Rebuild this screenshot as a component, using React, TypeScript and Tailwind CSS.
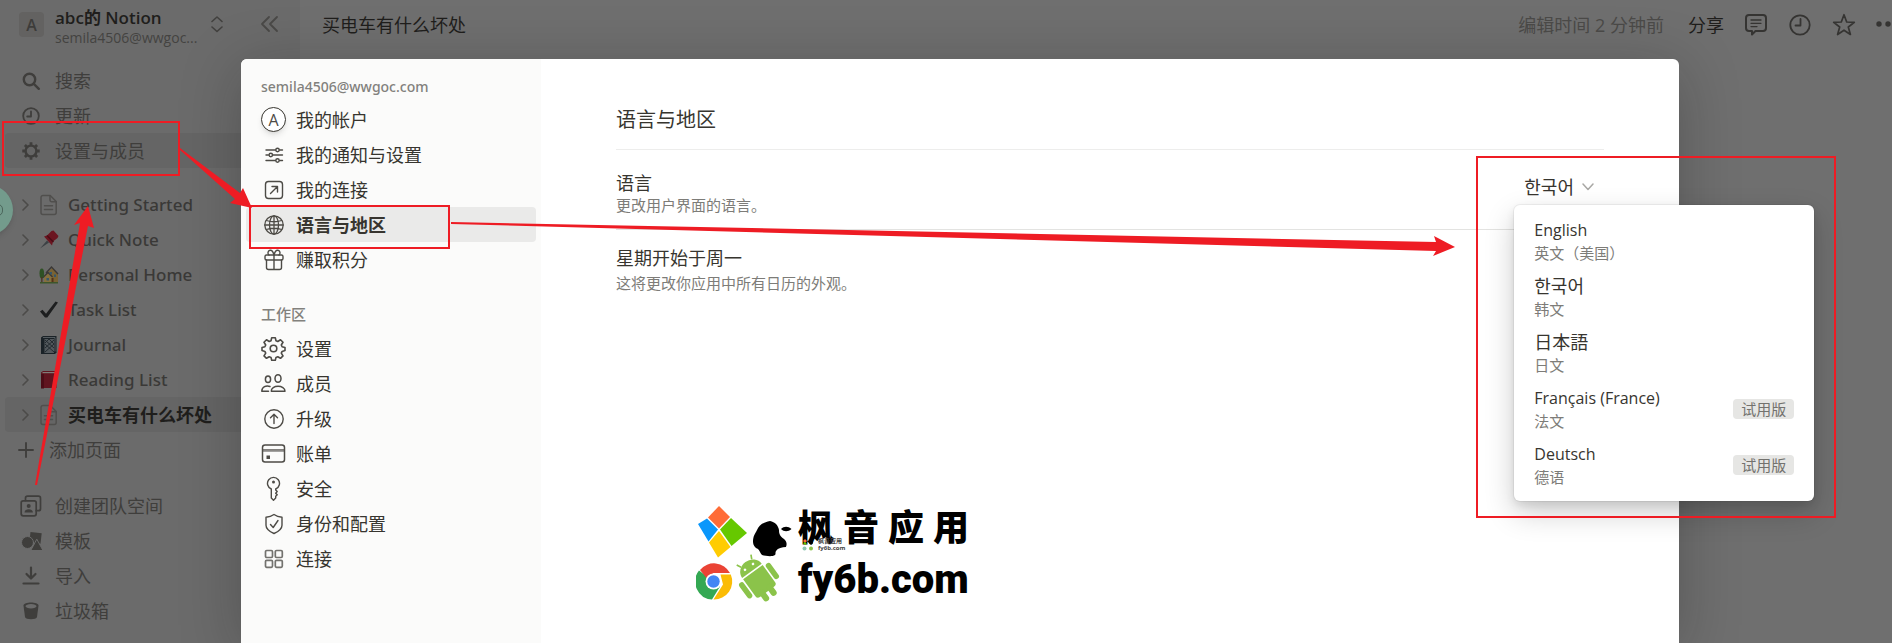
import type { ReactNode } from 'react'

type IconProps = { children: ReactNode; className?: string; box?: string; width?: number }

function Icon({ children, className = 'size-[22px]', box = '0 0 22 22', width = 1.4 }: IconProps) {
  return (
    <svg
      className={`shrink-0 ${className}`}
      viewBox={box}
      fill="none"
      stroke="currentColor"
      strokeWidth={width}
      strokeLinecap="round"
      strokeLinejoin="round"
      aria-hidden="true"
    >
      {children}
    </svg>
  )
}

const pageIcon = (
  <Icon className="size-[22px] text-[#504f4d]" width={1.5}>
    <path d="M5 1.500h7.200L18.200 7.500V18.500a2 2 0 0 1-2 2H5a2 2 0 0 1-2-2v-15a2 2 0 0 1 2-2z" />
    <path d="M12 1.700V6a1.700 1.700 0 0 0 1.700 1.700H18" />
    <path d="M6.500 11.700h8M6.500 15.500h8" />
  </Icon>
)

const topLinks = [
  {
    label: '搜索',
    icon: <Icon width={2.4}><circle cx="9.500" cy="9.500" r="5.700" /><path d="m13.800 13.800 5 5" /></Icon>,
  },
  {
    label: '更新',
    icon: <Icon width={1.8}><circle cx="11" cy="11" r="7.800" /><path d="M11 6.500V11.500H7.200" /></Icon>,
  },
  {
    label: '设置与成员',
    active: true,
    icon: (
      <Icon width={2.4}>
        <circle cx="11" cy="11" r="5.400" />
        <g strokeWidth="2.800" strokeLinecap="butt">
          <path d="M11 2.300v3.500M11 16.200v3.500M2.300 11H6M16 11h3.700M4.900 4.900l2.500 2.500M14.600 14.600 17.100 17.100M4.900 17.100l2.500-2.500M14.600 7.400 17.100 4.900" />
        </g>
      </Icon>
    ),
  },
]

const pages = [
  { label: 'Getting Started', icon: pageIcon },
  {
    label: 'Quick Note',
    icon: (
      <svg className="size-[20px]" viewBox="0 0 20 20" aria-hidden="true">
        <path d="m1 18.500 7-8 2 2z" fill="#3c4145" />
        <path d="m5 6.500 3-1 4.500-4.500 2-.5 5 5.500-1 2-4.500 3.500-1 4z" fill="#6b1520" />
        <path d="m8 5.500 6.500 6.500" stroke="#4a0c15" strokeWidth="1.500" />
      </svg>
    ),
  },
  {
    label: 'Personal Home',
    icon: (
      <svg className="size-[20px]" viewBox="0 0 20 20" aria-hidden="true">
        <path d="M8 8.500 13 3l6 6v8.500H7z" fill="#7a6334" />
        <path d="m5 12 4-4 4 4v5.500H5z" fill="#85703f" />
        <path d="m7 8 5.500-6L19 9M4 12.500l5-5 4.500 4.500" stroke="#3b3836" strokeWidth="1.400" fill="none" />
        <path d="M10.500 7h2.500v2.500h-2.500zM15 9.500h2V12h-2zM7.500 13H10v2.500H7.500z" fill="#34576d" />
        <path d="M12.500 13h2v4.500h-2z" fill="#543119" />
        <ellipse cx="2.800" cy="8.500" rx="2.300" ry="5" fill="#2f5125" />
        <path d="M2.200 12h1.300v5.500H2.200z" fill="#4d3320" />
        <path d="M1 17h18v1.500H1z" fill="#3d562b" />
      </svg>
    ),
  },
  {
    label: 'Task List',
    icon: (
      <svg className="size-[20px]" viewBox="0 0 20 20" aria-hidden="true">
        <path d="m1 11.500 2.500-1.800 3.500 4L16.500 1.500l2.500 1L8.300 17.500H6z" fill="#1d1e1f" />
      </svg>
    ),
  },
  {
    label: 'Journal',
    icon: (
      <svg className="size-[20px]" viewBox="0 0 20 20" aria-hidden="true">
        <path d="M2 2.500 4 1h13.500v16.500L16 19H2z" fill="#1a2227" />
        <path d="M5.500 4h9.500v14H5.500z" fill="#52585c" />
        <path d="m6 5 9 8M6 9l9 8M10 4l5 5M15 5l-9 8M15 9l-9 8M10 4 6 8" stroke="#222a2f" strokeWidth="1" />
        <path d="M4 2.500h12v14" stroke="#646b6f" strokeWidth=".8" fill="none" />
      </svg>
    ),
  },
  {
    label: 'Reading List',
    icon: (
      <svg className="size-[20px]" viewBox="0 0 20 20" aria-hidden="true">
        <path d="M2 2.500 4 1h13.500v17H2z" fill="#60141f" />
        <path d="M3.500 2h13v1.200h-13z" fill="#817b78" />
        <path d="M2 4h3v14.500H2z" fill="#4c0c16" />
      </svg>
    ),
  },
  { label: '买电车有什么坏处', icon: pageIcon, active: true },
]

const bottomLinks = [
  {
    label: '创建团队空间',
    icon: (
      <Icon width={1.700}>
        <path d="M5.500 5.500V3.200a2 2 0 0 1 2-2h11a2 2 0 0 1 2 2v10.500a2 2 0 0 1-2 2h-2.300" />
        <rect x="1.200" y="5.800" width="15" height="15" rx="2" />
        <circle cx="8.700" cy="11" r="2" fill="currentColor" stroke="none" />
        <path d="M4.500 17.500c0-4.300 8.400-4.300 8.400 0z" fill="currentColor" stroke="none" />
      </Icon>
    ),
  },
  {
    label: '模板',
    icon: (
      <Icon>
        <g fill="currentColor" stroke="none">
          <path d="m10.500 2 11.200 1.300-1.200 10.500-11.200-1.300z" />
          <circle cx="7.500" cy="12.500" r="6" stroke="#6b6b6b" strokeWidth="1" />
          <path d="m17 9.500 6 11H11z" stroke="#6b6b6b" strokeWidth="1" />
        </g>
      </Icon>
    ),
  },
  { label: '导入', icon: <Icon width={2.200}><path d="M11 2.500v10M6.500 9l4.500 4.500L15.500 9M3.500 18.500h15" /></Icon> },
  {
    label: '垃圾箱',
    icon: (
      <Icon>
        <path d="M3.500 5.500c0-4 15-4 15 0L17 17c-.5 3-11.500 3-12 0z" fill="currentColor" stroke="none" />
        <ellipse cx="11" cy="6.200" rx="5.500" ry="2.200" fill="#6b6b6b" stroke="none" />
      </Icon>
    ),
  },
]

const accountItems = [
  {
    label: '我的帐户',
    icon: (
      <span className="flex size-[25px] shrink-0 items-center justify-center rounded-full border border-[#37352f] bg-white text-base shadow-md">
        A
      </span>
    ),
  },
  {
    label: '我的通知与设置',
    icon: (
      <Icon>
        <path d="M3 6h9.500M16.500 6h3M3 11h2.500M9.500 11h10M3 16.500h9.500M16.500 16.500h3" />
        <circle cx="14.500" cy="6" r="1.700" /><circle cx="7.800" cy="11" r="1.700" /><circle cx="14.500" cy="16.500" r="1.700" />
      </Icon>
    ),
  },
  {
    label: '我的连接',
    icon: <Icon><rect x="2.500" y="2.500" width="17" height="17" rx="3" /><path d="m7.500 14.500 6.500-6.500M9 7.500h5.500V13" /></Icon>,
  },
  {
    label: '语言与地区',
    active: true,
    icon: (
      <Icon width={1.300}>
        <circle cx="11" cy="11" r="9.200" />
        <ellipse cx="11" cy="11" rx="4.500" ry="9.200" />
        <path d="M11 1.800v18.400M1.800 11h18.400M3.500 6.500c4.500 1.500 10.500 1.500 15 0M3.500 15.500c4.500-1.500 10.500-1.500 15 0" />
      </Icon>
    ),
  },
  {
    label: '赚取积分',
    icon: (
      <Icon>
        <rect x="2" y="6" width="18" height="5" rx="1.500" />
        <path d="M3.500 11v7.500a2 2 0 0 0 2 2h11a2 2 0 0 0 2-2V11M11 6v14.500" />
        <path d="M11 6C10 2 8.500 1 7 1.200 4.500 1.600 4.500 5 6 6M11 6c1-4 2.500-5 4-4.800C17.500 1.600 17.500 5 16 6" />
      </Icon>
    ),
  },
]

const workspaceItems = [
  {
    label: '设置',
    icon: (
      <Icon className="size-[25px]" box="0 0 25 25" width={1.600}>
        <circle cx="12.500" cy="12.500" r="3.300" />
        <path d="M10.700 1.700h3.600l.7 3 1.800.8 2.700-1.700 2.500 2.500-1.700 2.700.8 1.800 2.900.7v3l-2.900.9-.8 1.700 1.700 2.800-2.500 2.400-2.700-1.600-1.800.7-.7 2.900h-3.600l-.7-2.900-1.800-.7-2.700 1.600L3 19.900l1.700-2.800-.8-1.700L1 14.500v-3l2.900-.7.8-1.800L3 6.300l2.500-2.500 2.700 1.700 1.800-.8z" />
      </Icon>
    ),
  },
  {
    label: '成员',
    icon: (
      <Icon className="size-[25px]" box="0 0 25 25" width={1.500}>
        <ellipse cx="17" cy="7.500" rx="3" ry="3.800" /><ellipse cx="7" cy="8.300" rx="2.600" ry="3.300" />
        <path d="M10.300 20.300c-.6-6.600 14-6.600 13.700 0zM7.500 20.300H.8c0-4.500 4.400-6.300 8.200-4.800" />
      </Icon>
    ),
  },
  { label: '升级', icon: <Icon><circle cx="11" cy="11" r="9.200" /><path d="M11 15.500v-9M7.500 9.700 11 6.300l3.500 3.400" /></Icon> },
  {
    label: '账单',
    icon: (
      <Icon className="size-[25px]" box="0 0 25 25" width={1.500}>
        <rect x="1.500" y="4" width="22" height="17" rx="2.500" /><path d="M1.500 8.800h22M1.500 10h22" strokeWidth="1" />
        <path d="M5.500 14.500h3.500V18H5.500z" fill="currentColor" stroke="none" />
      </Icon>
    ),
  },
  {
    label: '安全',
    icon: (
      <Icon className="size-[25px]" box="0 0 25 25">
        <path d="M10.300 13V22l2.200 2.200 2.200-2.200v-1.700l1.500-1.500-1.500-1.600 1.500-1.700-1.500-1.500v-1a6 6 0 1 0-4.400 0z" />
        <circle cx="12.500" cy="6" r="1.500" fill="currentColor" stroke="none" />
      </Icon>
    ),
  },
  {
    label: '身份和配置',
    icon: <Icon><path d="M11 1.500c2.500 1.800 5 2.500 8 2.700v8c0 4-4 6.500-8 8.300-4-1.800-8-4.300-8-8.300v-8c3-.2 5.500-.9 8-2.700z" /><path d="m7.500 11.500 2.700 3L15 7.500" /></Icon>,
  },
  {
    label: '连接',
    icon: (
      <Icon className="size-[22px] text-[#73726e]" width={1.700}>
        <rect x="2.500" y="2.500" width="7" height="7" rx="1.200" /><rect x="12.300" y="2.500" width="7" height="7" rx="1.200" />
        <rect x="2.500" y="12.300" width="7" height="7" rx="1.200" /><rect x="12.300" y="12.300" width="7" height="7" rx="1.200" />
      </Icon>
    ),
  },
]

const languages = [
  { name: 'English', note: '英文（美国）' },
  { name: '한국어', note: '韩文', lang: 'ko' },
  { name: '日本語', note: '日文', lang: 'ja' },
  { name: 'Français (France)', note: '法文', beta: true },
  { name: 'Deutsch', note: '德语', beta: true },
]

function SideLink({ label, icon, active }: { label: string; icon: ReactNode; active?: boolean }) {
  return (
    <a href="#" className={`mx-[5px] flex h-[35px] items-center gap-[13px] rounded pl-[15px] text-lg text-[#3f3e3c] ${active ? 'bg-[#656565]' : ''}`}>
      {icon}
      {label}
    </a>
  )
}

function SettingsItem({ label, icon, active }: { label: string; icon: ReactNode; active?: boolean }) {
  return (
    <button type="button" className={`mx-[5px] flex h-[35px] items-center gap-[10px] rounded pl-[15px] text-lg ${active ? 'bg-[#eaeae9] font-bold' : ''}`}>
      <span className="flex w-[25px] justify-center text-[#4d4b46]">{icon}</span>
      {label}
    </button>
  )
}

function Sidebar() {
  return (
    <aside className="flex w-[300px] shrink-0 flex-col bg-[#6b6b6b]">
      <div className="flex h-[63px] items-start pt-2 pl-[19px]">
        <span className="mt-1 flex size-[25px] items-center justify-center rounded bg-[#636261] font-semibold text-[#3d3c3a]">A</span>
        <div className="ml-[11px] w-[153px] whitespace-nowrap">
          <div className="text-[17px] leading-[20px] font-semibold text-[#1f1e1c]">abc的 Notion</div>
          <div className="text-sm leading-[20px] text-[#444341]">semila4506@wwgoc...</div>
        </div>
        <Icon className="mt-1 ml-[3px] h-6 w-3 text-[#42413f]" box="0 0 12 24" width={1.600}>
          <path d="m1 9.500 5-4.500 5 4.500M1 15l5 4.500 5-4.500" />
        </Icon>
        <button type="button" aria-label="Close sidebar" className="mt-1 ml-[36px] text-[#4a4947]">
          <Icon className="h-6 w-5" box="0 0 20 24" width={1.800}>
            <path d="m10 5-7 7 7 7M18 5l-7 7 7 7" />
          </Icon>
        </button>
      </div>
      <nav className="flex flex-col">
        {topLinks.map((link) => <SideLink key={link.label} {...link} />)}
      </nav>
      <nav className="mt-[19px] flex flex-col">
        {pages.map((page) => (
          <a
            key={page.label}
            href="#"
            className={`mx-[5px] flex h-[35px] items-center rounded pl-[14px] font-['Noto_Sans','Noto_Sans_CJK_SC',sans-serif] ${page.active ? 'bg-[#656565] text-lg font-bold text-[#1f1e1c]' : 'text-[17px] font-medium text-[#3a3937]'}`}
          >
            <Icon className="h-3 w-3 text-[#4c4b49]" box="0 0 12 12" width={1.600}><path d="m4 1 5 5-5 5" /></Icon>
            <span className="ml-[7px] flex w-[22px] justify-center">{page.icon}</span>
            <span className="ml-2">{page.label}</span>
          </a>
        ))}
        <button type="button" className="flex h-[35px] items-center gap-3 pl-[15px] text-lg text-[#3f3e3c]">
          <Icon width={1.900}><path d="M11 4v14M4 11h14" /></Icon>
          添加页面
        </button>
      </nav>
      <nav className="mt-[21px] flex flex-col">
        {bottomLinks.map((link) => <SideLink key={link.label} {...link} />)}
      </nav>
    </aside>
  )
}

function TopBar() {
  return (
    <header className="flex h-[50px] items-center pl-[22px] text-lg text-[#1f1e1c]">
      <h1>买电车有什么坏处</h1>
      <span className="ml-auto text-[#4b4a48]">编辑时间 2 分钟前</span>
      <button type="button" className="ml-6">分享</button>
      <button type="button" aria-label="Comments" className="ml-5 text-[#353432]">
        <Icon className="size-6" box="0 0 24 24" width={2}>
          <path d="M5 2h14a3 3 0 0 1 3 3v10a3 3 0 0 1-3 3h-7.500L8 21.500V18H5a3 3 0 0 1-3-3V5a3 3 0 0 1 3-3z" />
          <path d="M7 7h10M7 10.300h10M7 13.600h6" strokeWidth="1.300" />
        </Icon>
      </button>
      <button type="button" aria-label="Updates" className="ml-5 text-[#353432]">
        <Icon className="size-6" box="0 0 24 24" width={1.800}><circle cx="12" cy="12" r="9.700" /><path d="M12.500 6v6.500h-5" /></Icon>
      </button>
      <button type="button" aria-label="Favorite" className="ml-5 text-[#353432]">
        <Icon className="size-6" box="0 0 24 24" width={1.700}>
          <path d="m12 1.700 2.700 7.300 7.600.3-6 4.700 2.100 7.500-6.400-4.300-6.400 4.300 2.100-7.500-6-4.700 7.600-.3z" />
        </Icon>
      </button>
      <button type="button" aria-label="More" className="ml-5 text-[#353432]">
        <svg className="h-6 w-4" viewBox="0 0 16 24" fill="currentColor" aria-hidden="true">
          <circle cx="3" cy="11" r="2.700" /><circle cx="12" cy="11" r="2.700" />
        </svg>
      </button>
    </header>
  )
}

function LanguageSelect() {
  return (
    <div className="relative">
      <button type="button" aria-haspopup="listbox" aria-expanded="true" className="flex h-9 items-center gap-2 px-[10px] text-lg" lang="ko">
        한국어
        <Icon className="size-3 text-[#a9a8a5]" box="0 0 12 12" width={1.500}><path d="m1 3 5 5.500L11 3" /></Icon>
      </button>
      <ul
        role="listbox"
        aria-label="语言"
        className="absolute top-full left-0 z-10 w-[300px] rounded-md bg-white py-2 shadow-[0_0_0_1px_rgba(15,15,15,0.05),0_4px_8px_rgba(15,15,15,0.1),0_12px_30px_rgba(15,15,15,0.2)]"
      >
        {languages.map((item) => (
          <li key={item.name} role="option" aria-selected={item.lang === 'ko'} className="flex h-14 items-center justify-between px-5">
            <div>
              <div className={`leading-6 ${item.lang ? 'text-lg' : 'text-base'}`} lang={item.lang}>{item.name}</div>
              <div className="text-[15px] leading-[22px] text-[#7d7c78]">{item.note}</div>
            </div>
            {item.beta && <span className="rounded bg-[#e6e6e4] px-2 text-[15px] leading-5 text-[#73726e]">试用版</span>}
          </li>
        ))}
      </ul>
    </div>
  )
}

function BrandMark() {
  return (
    <div className="pointer-events-none absolute top-[445px] left-[455px] flex gap-1 text-black">
      <svg className="h-[104px] w-[98px]" viewBox="0 0 98 104" aria-hidden="true">
        <path d="M23 2 34 13 23 24.500 12 13.500z" fill="#ff6c37" />
        <path d="m11 14.500 11 11-9.500 12L2 20z" fill="#0a97fb" />
        <path d="m35 14 16 15-15.500 13L24 25.500z" fill="#66c800" />
        <path d="m23 27 11.500 16L22 53.500 13 38.500z" fill="#ffcc02" />
        <path d="M57 38c0-6 2-8 4-12 2-5 7-8 13-9 5 1 8 4 9 9 0 4 1 6 5 9 3 3 3 5 2 8-4 0-8 1-10 4-1 2 0 3-1 4-3 2-9 1-13 0-2-2-2-4-4-6-3-1-5-4-5-7z" />
        <path d="M85 25c3-3 7-3 10.500 0-3.500 3-7.500 3-10.500 0z" />
        <path d="M17.500 77.500 3 66.500A18 18 0 0 0 16 95.500l8-13z" fill="#34a853" />
        <path d="M4 66a18 18 0 0 1 30 3H17.500l-7 5z" fill="#ea4335" />
        <path d="M24.500 70.500h10.300a18 18 0 0 1-17.300 25l9.500-15z" fill="#fbbc05" />
        <circle cx="17.500" cy="77.500" r="8" fill="#fff" /><circle cx="17.500" cy="77.500" r="6.200" fill="#4285f4" />
        <g transform="translate(64 78) rotate(-36) scale(1.100)" fill="#8bc34a">
          <path d="M-11-12.500a11 10 0 0 1 22 0z" /><path d="M-11-11h22V8a3 3 0 0 1-3 3H-8a3 3 0 0 1-3-3z" />
          <rect x="-17.500" y="-10" width="5" height="17" rx="2.500" /><rect x="12.500" y="-10" width="5" height="17" rx="2.500" />
          <rect x="-7" y="6" width="5.500" height="12" rx="2.700" /><rect x="1.500" y="6" width="5.500" height="12" rx="2.700" />
          <path d="m-6-21-2-4M6-21l2-4" stroke="#8bc34a" strokeWidth="1.500" />
          <circle cx="-4.500" cy="-17" r="1.200" fill="#fff" /><circle cx="4.500" cy="-17" r="1.200" fill="#fff" />
        </g>
      </svg>
      <div className="relative flex flex-col">
        <div className="flex h-[48px] items-center gap-[9px] text-4xl font-black">
          <span>枫</span><span>音</span><span>应</span><span>用</span>
        </div>
        <div className="font-['Roboto',sans-serif] text-[40px] leading-[56px] font-black">fy6b.com</div>
        <div className="absolute top-[34px] left-1 flex items-center gap-1 text-[6px] leading-[7px] text-[#444444]">
          <svg className="h-3 w-3" viewBox="0 0 12 12" aria-hidden="true">
            <path d="m3 0 2 2-2 2-2-2z" fill="#ff6c37" /><path d="m3 3 2 2-2 1-2-2z" fill="#66c800" />
            <circle cx="9" cy="3.500" r="2" fill="#000" /><circle cx="2.500" cy="9.500" r="2" fill="#8fc5b0" /><circle cx="9" cy="9.500" r="2" fill="#8bc34a" />
          </svg>
          <div className="font-bold">
            <div>枫音应用</div>
            <div>fy6b.com</div>
          </div>
        </div>
      </div>
    </div>
  )
}

function SettingsDialog() {
  return (
    <div
      role="dialog"
      aria-label="语言与地区"
      className="absolute top-[59px] right-[213px] bottom-0 left-[241px] flex rounded-t-md bg-white text-[#37352f] shadow-[0_10px_60px_rgba(15,15,15,0.25)]"
    >
      <nav className="flex w-[300px] shrink-0 flex-col rounded-tl-md bg-[#fbfbfa] pt-3">
        <div className="flex h-[31px] items-center pl-5 font-['Noto_Sans',sans-serif] text-sm font-medium text-[#82817d]">semila4506@wwgoc.com</div>
        {accountItems.map((item) => <SettingsItem key={item.label} {...item} />)}
        <h2 className="mt-5 flex h-[34px] items-center pl-5 text-[15px] font-medium text-[#82817d]">工作区</h2>
        {workspaceItems.map((item) => <SettingsItem key={item.label} {...item} />)}
      </nav>
      <section className="min-w-0 flex-1 px-[75px] pt-[46px]">
        <h2 className="border-b border-[#ededec] pb-[14px] text-xl leading-[30px]">语言与地区</h2>
        <div className="flex h-20 items-start justify-between border-b border-[#e3e3e1] pt-[19px]">
          <div className="pt-[2px]">
            <h3 className="text-lg leading-6">语言</h3>
            <p className="text-[15px] leading-5 text-[#7d7c78]">更改用户界面的语言。</p>
          </div>
          <LanguageSelect />
        </div>
        <h3 className="mt-4 text-lg leading-6">星期开始于周一</h3>
        <p className="mt-[3px] text-[15px] leading-5 text-[#7d7c78]">这将更改你应用中所有日历的外观。</p>
      </section>
      <BrandMark />
    </div>
  )
}

function Annotations() {
  return (
    <svg className="pointer-events-none absolute inset-0 z-20 h-full w-full" aria-hidden="true">
      <g fill="none" stroke="#ee1c24" strokeWidth="2">
        <rect x="3" y="122" width="176" height="53" />
        <rect x="250" y="206" width="199" height="42" />
        <rect x="1477" y="157" width="358" height="360" />
      </g>
      <g fill="#ee1c24">
        <path d="M180 148 240 193 243 188 252 208 230 203 235 199 180 150z" />
        <path d="M35 485 80 223 74 225 88 206 94 228 88 226 37 485z" />
        <path d="M451 222 1436 242 1434 236 1455 247 1433 256 1436 251 451 224z" />
      </g>
    </svg>
  )
}

export default function App() {
  return (
    <div className="relative flex h-screen overflow-hidden bg-[#6f6f6f] font-['Open_Sans','Noto_Sans_CJK_SC',sans-serif]" lang="zh-CN">
      <Sidebar />
      <main className="min-w-0 flex-1">
        <TopBar />
      </main>
      <span className="absolute top-[185px] -left-[37px] flex size-[50px] items-center justify-end rounded-full bg-[#739b8c] pr-[10px] shadow-md">
        <span className="h-3 w-[10px] rounded-full border border-[#4b665c]" />
      </span>
      <SettingsDialog />
      <Annotations />
    </div>
  )
}
